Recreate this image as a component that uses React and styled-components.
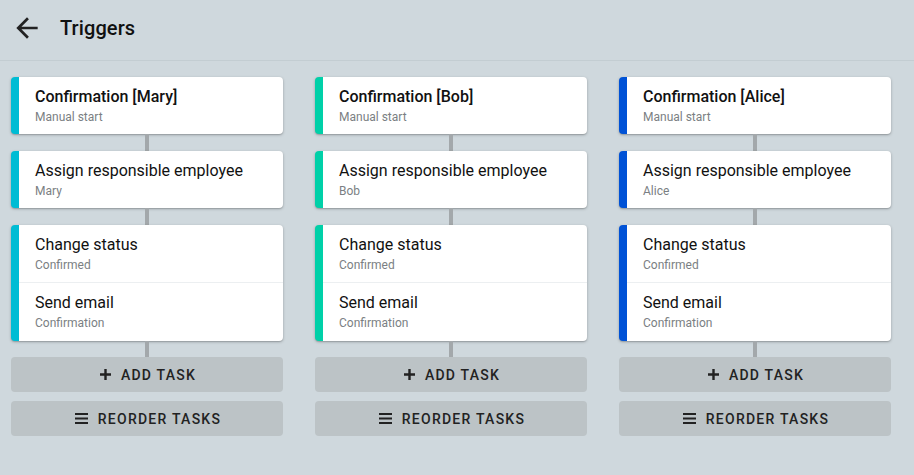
import React from "react"
import styled, { createGlobalStyle } from "styled-components"

const GlobalStyle = createGlobalStyle`
  html, body {
    margin: 0;
    padding: 0;
    background: #cfd8dd;
    font-family: Roboto, "Liberation Sans", sans-serif;
    color: #111;
  }
`

const Page = styled.div`
  width: 914px;
  height: 475px;
  background: #cfd8dd;
`

const Header = styled.div`
  height: 61px;
  display: flex;
  align-items: center;
  padding-bottom: 4px;
  border-bottom: 1px solid #c3cdd2;
  box-sizing: border-box;
`

const BackButton = styled.div`
  width: 60px;
  height: 56px;
  display: flex;
  align-items: center;
  padding-left: 11px;
  box-sizing: border-box;
  color: #222;
`

const Title = styled.h1`
  margin: 0;
  font-size: 20px;
  font-weight: 500;
  color: #111;
  letter-spacing: 0.1px;
`

const Columns = styled.div`
  display: flex;
  gap: 32px;
  padding: 16px 0 0 11px;
`

const Column = styled.div`
  width: 272px;
  display: flex;
  flex-direction: column;
  align-items: center;
`

const Card = styled.div`
  width: 100%;
  background: #fff;
  border-radius: 4px;
  border-left: 8px solid ${(p) => p.$color};
  box-sizing: border-box;
  box-shadow: 0 1px 3px rgba(0, 0, 0, 0.25), 0 1px 1px rgba(0, 0, 0, 0.1);
  overflow: hidden;
`

const Item = styled.div`
  padding: 10px 16px 9px 16px;
  height: 57px;
  box-sizing: border-box;
  & + & {
    border-top: 1px solid #eceff1;
    height: 59px;
    padding-top: 10px;
  }
`

const ItemTitle = styled.div`
  font-size: 16px;
  line-height: 20px;
  font-weight: ${(p) => (p.$bold ? 500 : 400)};
  color: #111;
`

const ItemSub = styled.div`
  margin-top: 2px;
  font-size: 12px;
  line-height: 16px;
  color: #7b7f83;
`

const Connector = styled.div`
  width: 4px;
  height: ${(p) => p.$h || 17}px;
  background: #a3a8ab;
`

const ActionButton = styled.button`
  width: 100%;
  height: 35px;
  border: none;
  border-radius: 4px;
  background: #bcc3c6;
  display: flex;
  align-items: center;
  justify-content: center;
  gap: 10px;
  font-family: Roboto, "Liberation Sans", sans-serif;
  font-size: 14px;
  font-weight: 500;
  letter-spacing: 1.25px;
  text-transform: uppercase;
  color: #222;
  margin-top: ${(p) => p.$mt || 0}px;
  cursor: pointer;
  padding: 0 0 0 2px;
`

const ArrowIcon = () => (
  <svg width="32" height="32" viewBox="0 0 24 24">
    <path d="M20 11H7.83l5.59-5.59L12 4l-8 8 8 8 1.41-1.41L7.83 13H20v-2z" fill="#222" />
  </svg>
)

const PlusIcon = () => (
  <svg width="11" height="11" viewBox="0 0 11 11">
    <path d="M4.3 0h2.4v4.3H11v2.4H6.7V11H4.3V6.7H0V4.3h4.3z" fill="#222" />
  </svg>
)

const MenuIcon = () => (
  <svg width="13" height="11" viewBox="0 0 13 11">
    <path d="M0 0h13v2H0zM0 4.5h13v2H0zM0 9h13v2H0z" fill="#222" />
  </svg>
)

const flows = [
  { name: "Mary", color: "#00bcd4" },
  { name: "Bob", color: "#00d0a8" },
  { name: "Alice", color: "#0052d6" },
]

const Flow = ({ name, color }) => (
  <Column>
    <Card $color={color}>
      <Item>
        <ItemTitle $bold>Confirmation [{name}]</ItemTitle>
        <ItemSub>Manual start</ItemSub>
      </Item>
    </Card>
    <Connector />
    <Card $color={color}>
      <Item>
        <ItemTitle>Assign responsible employee</ItemTitle>
        <ItemSub>{name}</ItemSub>
      </Item>
    </Card>
    <Connector />
    <Card $color={color}>
      <Item>
        <ItemTitle>Change status</ItemTitle>
        <ItemSub>Confirmed</ItemSub>
      </Item>
      <Item>
        <ItemTitle>Send email</ItemTitle>
        <ItemSub>Confirmation</ItemSub>
      </Item>
    </Card>
    <Connector $h={16} />
    <ActionButton>
      <PlusIcon />
      Add task
    </ActionButton>
    <ActionButton $mt={9}>
      <MenuIcon />
      Reorder tasks
    </ActionButton>
  </Column>
)

export default function App() {
  return (
    <Page>
      <GlobalStyle />
      <Header>
        <BackButton>
          <ArrowIcon />
        </BackButton>
        <Title>Triggers</Title>
      </Header>
      <Columns>
        {flows.map((f) => (
          <Flow key={f.name} {...f} />
        ))}
      </Columns>
    </Page>
  )
}
